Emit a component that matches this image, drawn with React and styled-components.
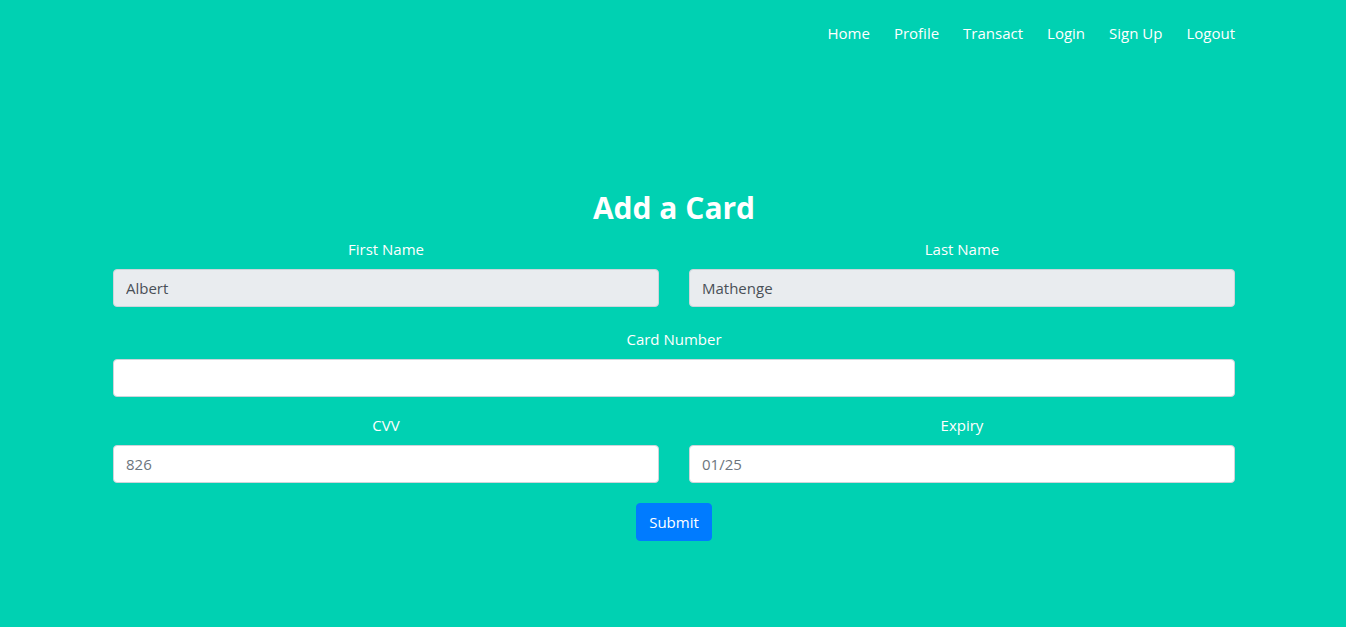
import React from "react";
import styled, { createGlobalStyle } from "styled-components";

const Global = createGlobalStyle`
  html, body { margin: 0; padding: 0; }
  body {
    background: #00d1b2;
    font-family: "Open Sans", "Liberation Sans", sans-serif;
    font-size: 16px;
    line-height: 24px;
    color: #fff;
    min-height: 627px;
  }
  * { box-sizing: border-box; }
`;

const Page = styled.div`
  width: 1122px;
  margin-left: calc(50% - 560px);
`;

const Nav = styled.nav`
  display: flex;
  justify-content: flex-end;
  gap: 24px;
  padding-top: 21px;
`;

const NavLink = styled.a`
  color: #fff;
  text-decoration: none;
  font-size: 15px;
  line-height: 24px;
`;

const Form = styled.form`
  display: flex;
  flex-direction: column;
  margin-top: 144px;
`;

const Title = styled.h2`
  margin: 0;
  font-size: 30px;
  font-weight: 700;
  line-height: 38px;
  text-align: center;
`;

const Row = styled.div`
  display: grid;
  grid-template-columns: ${(p) => (p.$cols === 2 ? "1fr 1fr" : "1fr")};
  column-gap: 30px;
  margin-top: ${(p) => p.$mt}px;
`;

const Group = styled.div`
  display: flex;
  flex-direction: column;
`;

const Label = styled.label`
  display: block;
  text-align: center;
  font-size: 15px;
  line-height: 24px;
  margin-bottom: 8px;
`;

const Input = styled.input`
  display: block;
  width: 100%;
  height: 38px;
  padding: 6px 12px;
  font-family: inherit;
  font-size: 15px;
  line-height: 24px;
  color: #495057;
  background: ${(p) => (p.readOnly ? "#e9ecef" : "#fff")};
  border: 1px solid #ced4da;
  border-radius: 4px;
  outline: none;
  &::placeholder { color: #6c757d; opacity: 1; }
`;

const Actions = styled.div`
  display: flex;
  justify-content: center;
  margin-top: 20px;
`;

const Button = styled.button`
  height: 38px;
  padding: 6px 12px;
  font-family: inherit;
  font-size: 15px;
  line-height: 24px;
  color: #fff;
  background: #007bff;
  border: 1px solid #007bff;
  border-radius: 4px;
  cursor: pointer;
`;

export default function App() {
  return (
    <>
      <Global />
      <Page>
        <Nav>
          {["Home", "Profile", "Transact", "Login", "Sign Up", "Logout"].map((l) => (
            <NavLink key={l} href="#">{l}</NavLink>
          ))}
        </Nav>
        <Form onSubmit={(e) => e.preventDefault()}>
          <Title>Add a Card</Title>
          <Row $cols={2} $mt={10}>
            <Group>
              <Label>First Name</Label>
              <Input readOnly value="Albert" />
            </Group>
            <Group>
              <Label>Last Name</Label>
              <Input readOnly value="Mathenge" />
            </Group>
          </Row>
          <Row $mt={20}>
            <Group>
              <Label>Card Number</Label>
              <Input />
            </Group>
          </Row>
          <Row $cols={2} $mt={16}>
            <Group>
              <Label>CVV</Label>
              <Input placeholder="826" />
            </Group>
            <Group>
              <Label>Expiry</Label>
              <Input placeholder="01/25" />
            </Group>
          </Row>
          <Actions>
            <Button type="submit">Submit</Button>
          </Actions>
        </Form>
      </Page>
    </>
  );
}
